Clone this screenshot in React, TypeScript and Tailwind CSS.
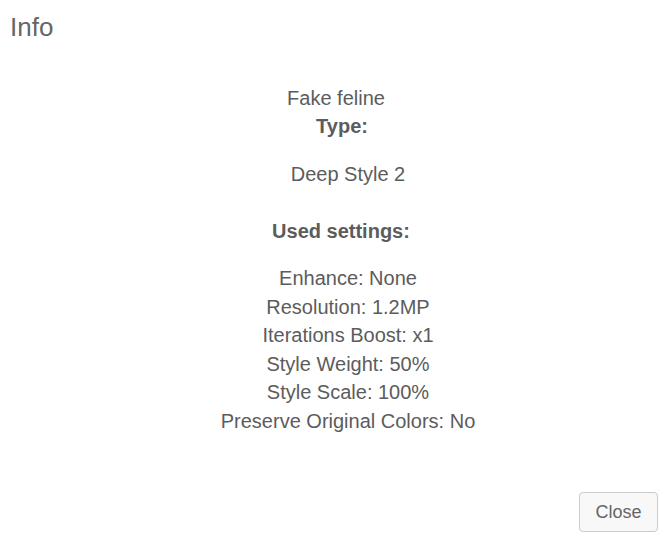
export default function App() {
  const settings = [
    "Enhance: None",
    "Resolution: 1.2MP",
    "Iterations Boost: x1",
    "Style Weight: 50%",
    "Style Scale: 100%",
    "Preserve Original Colors: No",
  ];

  return (
    <div
      className="w-[668px] h-[541px] bg-white text-[#5c5c5c] flex flex-col"
      style={{ fontFamily: '"Liberation Sans", Arial, sans-serif' }}
    >
      {/* header */}
      <div className="pl-[10px] pt-[10px] h-[84px]">
        <h4 className="text-[26px] leading-[34px] font-normal text-[#666]">Info</h4>
      </div>

      {/* body */}
      <div className="flex flex-col items-center text-[20px] leading-[28px]">
        <p className="pl-[4px]">Fake feline</p>
        <p className="font-bold pl-[16px]">Type:</p>
        <p className="mt-[20px] pl-[28px]">Deep Style 2</p>
        <p className="mt-[29px] font-bold pl-[14px]">Used settings:</p>
        <ul className="mt-[19px] pl-[28px] text-center leading-[28.6px]">
          {settings.map((s) => (
            <li key={s}>{s}</li>
          ))}
        </ul>
      </div>

      {/* footer */}
      <div className="mt-auto flex justify-end pr-[10px] pb-[9px]">
        <button className="w-[79px] h-[40px] border border-[#ccc] rounded-[4px] bg-[#f8f8f8] text-[18px] text-[#666]">
          Close
        </button>
      </div>
    </div>
  );
}
